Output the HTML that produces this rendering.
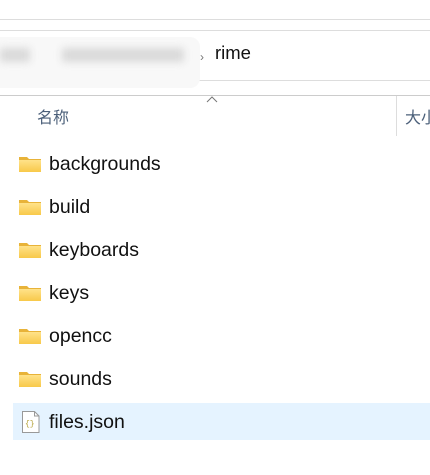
<!DOCTYPE html>
<html><head><meta charset="utf-8"><style>
body{margin:0;width:430px;height:475px;background:#fff;position:relative;overflow:hidden;font-family:"Segoe UI","Liberation Sans","Noto Sans CJK SC",sans-serif;}
.a{position:absolute;white-space:nowrap}
.row{position:absolute;left:49px;font-size:19.5px;color:#111;line-height:20px;white-space:nowrap}
.fold{position:absolute;left:19px;width:22px;height:16px}
</style></head><body>
<div class="a" style="left:0;top:19px;width:430px;height:1px;background:#ddd"></div>
<div class="a" style="left:0;top:30px;width:430px;height:1px;background:#ddd"></div>
<div class="a" style="left:198px;top:80px;width:232px;height:1px;background:#ddd"></div>
<div class="a" style="left:0;top:37px;width:200px;height:51px;background:#f8f8f8;border-radius:0 10px 10px 0"></div>
<div class="a" style="left:0;top:48px;width:30px;height:14px;background:#d9d9d9;filter:blur(4px)"></div>
<div class="a" style="left:62px;top:48px;width:122px;height:14px;background:#d9d9d9;filter:blur(4px)"></div>
<div class="a" style="left:200px;top:50px;font-size:12px;color:#777">›</div>
<div class="a" style="left:215px;top:42px;font-size:18.5px;color:#111">rime</div>
<div class="a" style="left:0;top:95px;width:430px;height:1px;background:#ccc"></div>
<svg class="a" style="left:206px;top:96px" width="12" height="7"><path d="M1 6L6 1L11 6" stroke="#777" fill="none"/></svg>
<div class="a" style="left:37px;top:104px;font-size:16px;color:#4c607a">名称</div>
<div class="a" style="left:396px;top:96px;width:1px;height:40px;background:#ddd"></div>
<div class="a" style="left:405px;top:104px;font-size:16px;color:#4c607a">大小</div>
<div class="a" style="left:13px;top:403px;width:417px;height:37px;background:#e5f3ff"></div>
<svg width="0" height="0" style="position:absolute"><defs><linearGradient id="g" x1="0" y1="0" x2="0" y2="1"><stop offset="0" stop-color="#ffe28a"/><stop offset="1" stop-color="#f8c94a"/></linearGradient></defs></svg>
<svg class="fold" style="top:156px" viewBox="0 0 22 16"><path d="M0 1h8l2 2h12v13H0z" fill="#e8b339"/><rect x="0" y="4" width="22" height="12" fill="url(#g)"/></svg>
<div class="row" style="top:154px">backgrounds</div>
<svg class="fold" style="top:199px" viewBox="0 0 22 16"><path d="M0 1h8l2 2h12v13H0z" fill="#e8b339"/><rect x="0" y="4" width="22" height="12" fill="url(#g)"/></svg>
<div class="row" style="top:197px">build</div>
<svg class="fold" style="top:242px" viewBox="0 0 22 16"><path d="M0 1h8l2 2h12v13H0z" fill="#e8b339"/><rect x="0" y="4" width="22" height="12" fill="url(#g)"/></svg>
<div class="row" style="top:240px">keyboards</div>
<svg class="fold" style="top:285px" viewBox="0 0 22 16"><path d="M0 1h8l2 2h12v13H0z" fill="#e8b339"/><rect x="0" y="4" width="22" height="12" fill="url(#g)"/></svg>
<div class="row" style="top:283px">keys</div>
<svg class="fold" style="top:328px" viewBox="0 0 22 16"><path d="M0 1h8l2 2h12v13H0z" fill="#e8b339"/><rect x="0" y="4" width="22" height="12" fill="url(#g)"/></svg>
<div class="row" style="top:326px">opencc</div>
<svg class="fold" style="top:371px" viewBox="0 0 22 16"><path d="M0 1h8l2 2h12v13H0z" fill="#e8b339"/><rect x="0" y="4" width="22" height="12" fill="url(#g)"/></svg>
<div class="row" style="top:369px">sounds</div>
<svg class="a" style="left:22px;top:411px" width="18" height="22" viewBox="0 0 18 22"><path d="M0.5 0.5h12l4.5 4.5v16.5H0.5z" fill="#fff" stroke="#999"/><path d="M12.5 0.5v4.5h4.5" fill="none" stroke="#999"/><text x="3" y="15" font-size="8" fill="#b5a23a" font-family="Liberation Mono,monospace">{}</text></svg>
<div class="row" style="top:412px">files.json</div>
</body></html>
